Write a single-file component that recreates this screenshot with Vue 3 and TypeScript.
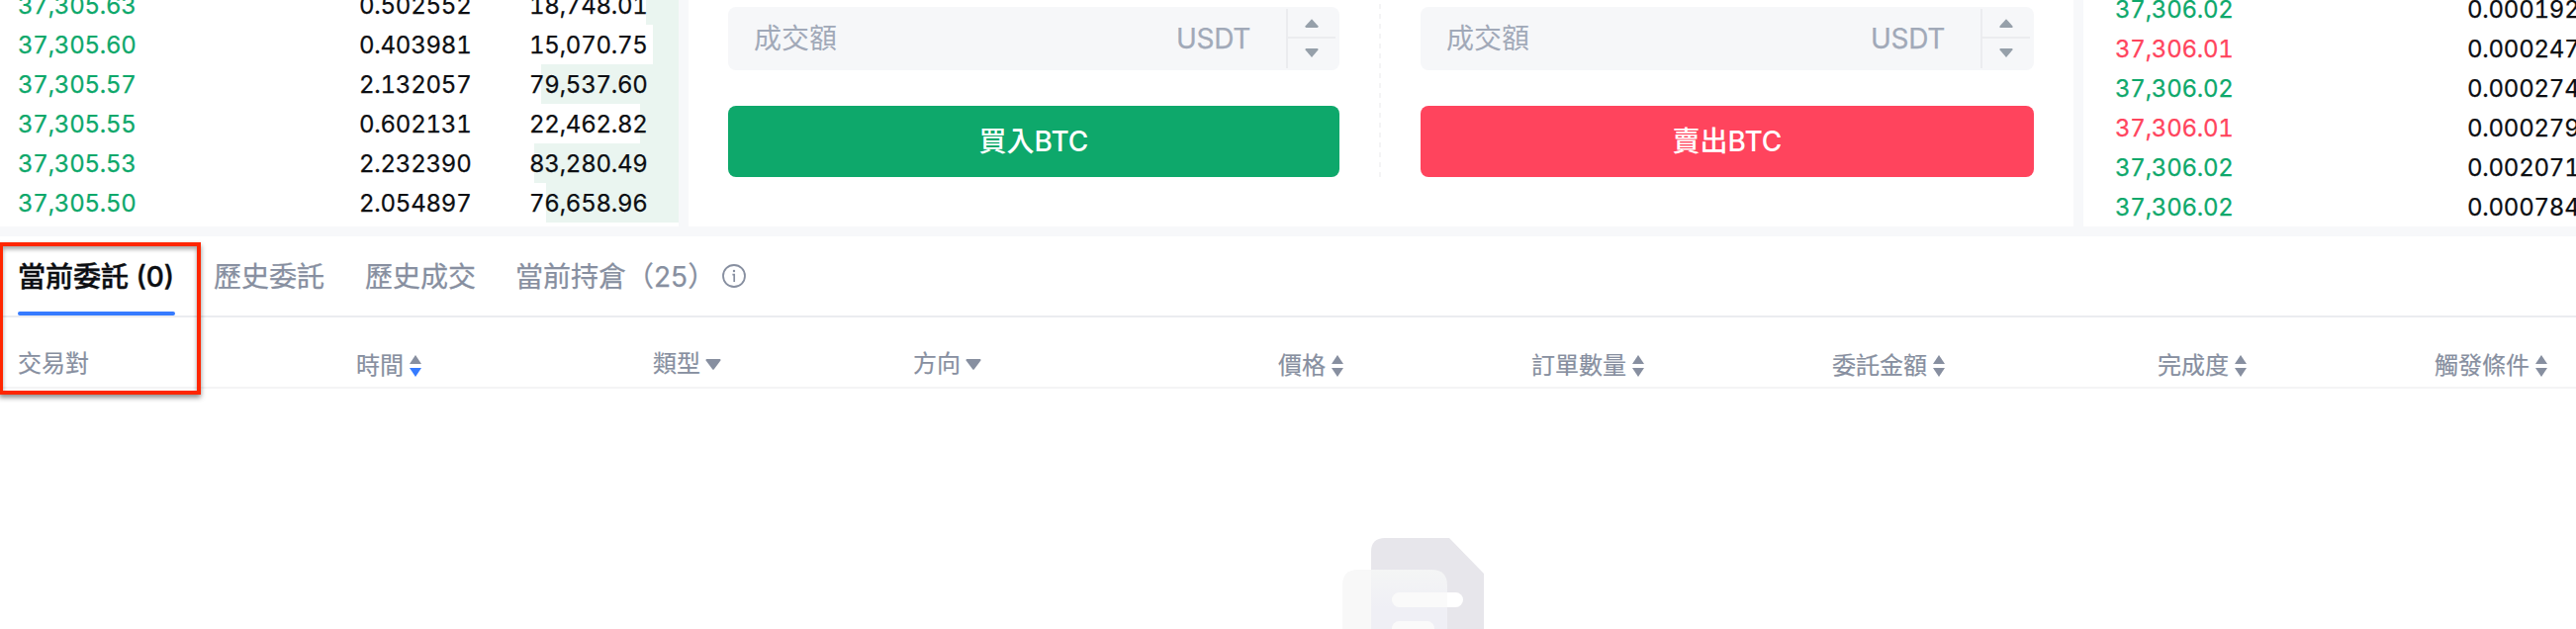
<script setup lang="ts">
interface BookRow { price: string; amount: string; total: string; depth: number }
interface Trade { price: string; amount: string; side: 'buy' | 'sell' }
interface Column { label: string; start: number; icon: 'none' | 'sort' | 'filter'; active?: boolean }

const book: BookRow[] = [
  { price: '37,305.63', amount: '0.502552', total: '18,748.01', depth: 33 },
  { price: '37,305.60', amount: '0.403981', total: '15,070.75', depth: 26 },
  { price: '37,305.57', amount: '2.132057', total: '79,537.60', depth: 139 },
  { price: '37,305.55', amount: '0.602131', total: '22,462.82', depth: 39 },
  { price: '37,305.53', amount: '2.232390', total: '83,280.49', depth: 146 },
  { price: '37,305.50', amount: '2.054897', total: '76,658.96', depth: 134 },
]

const trades: Trade[] = [
  { price: '37,306.02', amount: '0.000192', side: 'buy' },
  { price: '37,306.01', amount: '0.000247', side: 'sell' },
  { price: '37,306.02', amount: '0.000274', side: 'buy' },
  { price: '37,306.01', amount: '0.000279', side: 'sell' },
  { price: '37,306.02', amount: '0.002071', side: 'buy' },
  { price: '37,306.02', amount: '0.000784', side: 'buy' },
]

const forms = [
  { side: 'buy', label: '買入BTC' },
  { side: 'sell', label: '賣出BTC' },
]

const columns: Column[] = [
  { label: '交易對', start: 18, icon: 'none' },
  { label: '時間', start: 360, icon: 'sort', active: true },
  { label: '類型', start: 660, icon: 'filter' },
  { label: '方向', start: 923, icon: 'filter' },
  { label: '價格', start: 1292, icon: 'sort' },
  { label: '訂單數量', start: 1548, icon: 'sort' },
  { label: '委託金額', start: 1852, icon: 'sort' },
  { label: '完成度', start: 2181, icon: 'sort' },
  { label: '觸發條件', start: 2461, icon: 'sort' },
]

const gridColumns = columns
  .map((c, i) => (i < columns.length - 1 ? `${columns[i + 1].start - c.start}px` : '1fr'))
  .join(' ')
</script>

<template>
  <div class="page">
    <div class="top">
      <section class="panel book">
        <div v-for="row in book" :key="row.price" class="book-row">
          <i class="depth" :style="{ width: row.depth + 'px' }"></i>
          <span class="price buy-text">{{ row.price }}</span>
          <span class="amount">{{ row.amount }}</span>
          <span class="total">{{ row.total }}</span>
        </div>
      </section>

      <section class="panel order">
        <template v-for="form in forms" :key="form.side">
          <div class="form" :class="form.side">
            <div class="input">
              <span class="placeholder">成交額</span>
              <span class="unit">USDT</span>
              <div class="stepper">
                <div class="step up">
                  <svg width="14" height="9" viewBox="0 0 14 9"><path d="M7 0.3 13.4 7.3Q14 9 12.6 9H1.4Q0 9 0.6 7.3Z" /></svg>
                </div>
                <div class="step down">
                  <svg width="14" height="9" viewBox="0 0 14 9"><path d="M7 8.9 0.6 1.6Q0 0 1.4 0H12.6Q14 0 13.4 1.6Z" /></svg>
                </div>
              </div>
            </div>
            <button class="submit">{{ form.label }}</button>
          </div>
          <div v-if="form.side === 'buy'" class="divider"></div>
        </template>
      </section>

      <section class="panel trades">
        <div v-for="(t, i) in trades" :key="i" class="trade-row">
          <span class="price" :class="t.side + '-text'">{{ t.price }}</span>
          <span class="amount">{{ t.amount }}</span>
        </div>
      </section>
    </div>

    <section class="orders">
      <nav class="tabs">
        <a class="tab active">當前委託 (0)</a>
        <a class="tab">歷史委託</a>
        <a class="tab">歷史成交</a>
        <a class="tab positions">當前持倉<span class="count">（25）</span></a>
        <svg class="info" width="24" height="24" viewBox="0 0 24 24">
          <circle cx="12" cy="12" r="11" fill="none" stroke="#878fa0" stroke-width="1.8" />
          <path d="M10.4 10.6H12.2V18" fill="none" stroke="#878fa0" stroke-width="1.7" />
          <circle cx="12" cy="7" r="1.2" fill="#878fa0" />
        </svg>
      </nav>
      <div class="head" :style="{ gridTemplateColumns: gridColumns }">
        <div v-for="c in columns" :key="c.label" class="cell" :class="c.icon">
          <span>{{ c.label }}</span>
          <svg v-if="c.icon === 'sort'" width="12" height="22" viewBox="0 0 12 22">
            <path d="M6 0 12 9H0Z" />
            <path d="M6 22 12 13H0Z" :class="{ on: c.active }" />
          </svg>
          <svg v-else-if="c.icon === 'filter'" width="16" height="11" viewBox="0 0 16 11">
            <path d="M8.7 10.4Q8 11 7.3 10.4L0.6 1.5Q0 0 1.4 0H14.6Q16 0 15.4 1.5Z" />
          </svg>
        </div>
      </div>
      <div class="empty">
        <svg width="144" height="92" viewBox="0 0 144 92">
          <defs>
            <linearGradient id="sheet" x1="0" y1="0" x2="0" y2="1">
              <stop offset="0" stop-color="#f4f5f5" />
              <stop offset="0.65" stop-color="#efeff5" />
            </linearGradient>
          </defs>
          <path d="M29 92V14Q29 0 43 0H108L143 36V92Z" fill="#e7e6eb" />
          <rect x="50" y="55" width="72" height="15" rx="7.5" fill="#fff" />
          <path d="M0 92V48Q0 32 16 32H29V92Z" fill="#f8f8f8" />
          <path d="M29 92V32H90Q106 32 106 48V92Z" fill="url(#sheet)" />
          <path d="M106 55H57.5a7.5 7.5 0 0 0 0 15H106Z" fill="#fafafa" />
          <rect x="50" y="84" width="43" height="15" rx="7.5" fill="#fafafa" />
        </svg>
      </div>
      <div class="highlight"></div>
    </section>
  </div>
</template>

<style>
body { margin: 0; overflow: hidden; }
</style>

<style scoped>
.page {
  width: 2604px;
  height: 636px;
  overflow: hidden;
  display: flex;
  flex-direction: column;
  gap: 10px;
  background: #f7f8fa;
  color: #0c0e12;
  font-family: Inter, "Noto Sans CJK TC", sans-serif;
  font-size: 24px;
}
.top { display: grid; grid-template-columns: 686px 1400px 1fr; gap: 10px; height: 229px; flex: none; }
.panel { background: #fff; overflow: hidden; height: 229px; }
.buy-text { color: #0ea86b; }
.sell-text { color: #ff445d; }

.book, .trades { display: flex; flex-direction: column; justify-content: flex-end; box-sizing: border-box; }
.book { padding-bottom: 4px; }
.book-row, .trade-row {
  height: 40px;
  line-height: 42px;
  flex: none;
  font-feature-settings: "tnum";
  letter-spacing: -0.24px;
  -webkit-text-stroke: 0.25px currentColor;
  display: grid;
  position: relative;
  white-space: nowrap;
}
.book-row { grid-template-columns: 345px 172px 1fr; padding-left: 18px; }
.book-row span { position: relative; }
.depth { position: absolute; right: 0; top: 0; height: 40px; background: #eaf5f0; }
.trade-row { grid-template-columns: 356px 1fr; padding-left: 32px; }

.order { display: flex; padding: 7px 40px 0; box-sizing: border-box; }
.form { display: flex; flex-direction: column; gap: 36px; }
.form.buy { width: 618px; }
.form.sell { width: 620px; }
.divider { width: 2px; height: 179px; margin: -7px 40px 0 40px; background: repeating-linear-gradient(to bottom, #f4f4f5 0 5px, transparent 5px 10px) 0 4px; }
.input { display: flex; align-items: center; height: 64px; box-sizing: border-box; padding: 2px 4px 2px 26px; border-radius: 8px; background: #f6f7f9; color: #a1a9b8; font-size: 28px; line-height: 64px; }
.unit { margin-left: auto; margin-right: 36px; letter-spacing: -0.3px; -webkit-text-stroke: 0.25px currentColor; }
.stepper { width: 48px; height: 60px; border-left: 2px solid #ebecef; display: flex; flex-direction: column; }
.step { height: 28px; display: flex; justify-content: center; }
.step svg { fill: #96a0aa; }
.step.up { border-bottom: 2px solid #ebecef; }
.step.up svg { margin-top: 10px; }
.step.down svg { margin-top: 10px; }
.submit { height: 72px; border: 0; border-radius: 8px; color: #fff; font: 500 28px/72px Inter, "Noto Sans CJK TC", sans-serif; padding: 0; }
.buy .submit { background: #0ea86b; }
.sell .submit { background: #ff445d; }

.orders { position: relative; flex: 1; background: #fff; }
.tabs { display: flex; height: 80px; padding-left: 18px; border-bottom: 2px solid #ebecf0; font-size: 28px; line-height: 82px; color: #878fa0; white-space: nowrap; }
.tab { margin-right: 41px; position: relative; height: 80px; -webkit-text-stroke: 0.25px currentColor; }
.tab.active { color: #0c0e12; font-weight: 500; width: 159px; margin-right: 39px; -webkit-text-stroke: 0.4px currentColor; }
.tab.active::after { content: ""; position: absolute; left: 0; right: 0; bottom: 0; height: 4px; border-radius: 2px; background: #367bff; }
.tab.positions { width: 209px; margin: 0 0 0 -1px; }
.info { flex: none; margin-top: 28px; overflow: visible; }
.head { display: grid; height: 70px; padding-left: 18px; border-bottom: 2px solid #f4f4f5; color: #878fa0; white-space: nowrap; line-height: 36px; -webkit-text-stroke: 0.2px currentColor; }
.cell { display: flex; align-items: flex-start; padding-top: 29px; }
.cell.sort { padding-top: 31px; }
.cell svg { fill: #878fa0; }
.sort svg { margin: 7px 0 0 6px; }
.filter svg { margin: 13px 0 0 5px; }
.sort svg .on { fill: #367bff; }
.empty { padding: 151px 0 0 1357px; height: 92px; }
.empty svg { display: block; }
.highlight { position: absolute; left: -1px; top: 6px; width: 196px; height: 146px; border: 4px solid #ff2600; box-shadow: 0 3px 5px rgba(0, 0, 0, 0.45), inset 0 3px 4px rgba(0, 0, 0, 0.35); }
</style>
